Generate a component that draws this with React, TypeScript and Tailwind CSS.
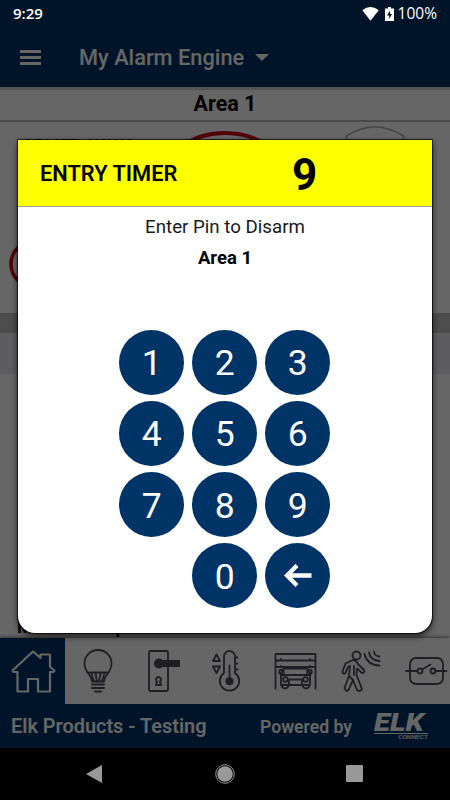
import React, { useState } from "react";

const stroke = { fill: "none", stroke: "currentColor", strokeWidth: 1.8, strokeLinecap: "round", strokeLinejoin: "round" } as const;

function HomeIcon() {
  return (
    <svg width="46" height="46" viewBox="0 0 46 46" {...stroke} strokeWidth={2.2}>
      <path d="M2.500 22.500 L23 3.500 L30.500 10 V6.500 H40 V19 L44.500 22.500 L43.500 24 H40 V43.500 H28 V31 H18 V43.500 H7.500 V24 H3.500 Z" />
    </svg>
  );
}

function BulbIcon() {
  return (
    <svg width="46" height="46" viewBox="0 0 46 46" {...stroke}>
      <path d="M17 33.500 C17 27 9.500 25 9.500 15.500 A13.500 13.500 0 0 1 36.500 15.500 C36.500 25 29 27 29 33.500 Z" />
      <path d="M14 24.500 H32 M16.500 25.500 L19 33.500 M20.500 25.500 L22 33.500 M25.500 25.500 L24 33.500 M29.500 25.500 L27 33.500 M17 36.500 H29 M17 40 H29 M20 43.500 H26" />
    </svg>
  );
}

function DoorIcon() {
  return (
    <svg width="46" height="46" viewBox="0 0 46 46" {...stroke}>
      <rect x="8" y="3" width="19" height="40" rx="1.500" />
      <circle cx="18" cy="15.500" r="5" fill="currentColor" stroke="none" />
      <path d="M18 12 H39 V19 H18 Z" fill="currentColor" stroke="none" />
      <path d="M16 33.500 A2.500 2.500 0 1 1 19 33.500 L20 37 H15 Z" strokeWidth="2" />
    </svg>
  );
}

function ThermometerIcon() {
  return (
    <svg width="46" height="46" viewBox="0 0 46 46" {...stroke}>
      <path d="M18 25 V8.500 A5.500 5.500 0 0 1 29 8.500 V25 A9.700 9.700 0 1 1 18 25 Z" />
      <path d="M23.500 17.500 V33 M30 9.500 H31.500 M30 15.500 H31.500 M30 21.500 H31.500" />
      <circle cx="23.500" cy="33.300" r="4" fill="currentColor" stroke="none" />
      <path d="M10.500 6.500 L14 13 H7 Z M7 18.500 H14 L10.500 25 Z" />
    </svg>
  );
}

function GarageIcon() {
  return (
    <svg width="46" height="46" viewBox="0 0 46 46" {...stroke}>
      <path d="M3.500 40.500 V6 H43.500 V40.500 M4 12.500 H43 M4 19 H43 M9 11 H9.100 M38 11 H38.100 M9 18 H9.100 M38 18 H38.100" />
      <path d="M9 37 V25 L12 20.500 H35 L38 25 V37 Z M9 27 H38 M17 36 V31.500 H30 V36" />
      <circle cx="9.500" cy="24" r="2.300" />
      <circle cx="37.500" cy="24" r="2.300" />
      <circle cx="13.500" cy="31.500" r="2.300" />
      <circle cx="33.500" cy="31.500" r="2.300" />
      <path d="M10 37 V39 Q13 42 16 39 V37 M31 37 V39 Q34 42 37 39 V37" />
    </svg>
  );
}

function MotionIcon() {
  return (
    <svg width="46" height="46" viewBox="0 0 46 46" {...stroke}>
      <circle cx="18.500" cy="7.500" r="4" />
      <path d="M15 12 L7.500 15.500 L4.500 23.500 Q5 27 7.500 25 L10 19 L12 18 L11 28 L6.500 40 Q8 44.500 10.500 42 L15 32 L19 42 Q22 44.500 24 41 L18.500 27 L19 20.500 L24 25 Q27 25 26 22 L20 16 Q18 12 15 12 Z" />
      <path d="M16 18 V27 M11 28 L15 32" />
      <path d="M26.500 6 Q29 17 41.500 17.500 M31 4.500 Q32.500 12.500 41.500 13 M36 3.500 Q36.500 8 41.500 8.500" />
    </svg>
  );
}

function SwitchIcon() {
  return (
    <svg width="46" height="46" viewBox="0 0 46 46" {...stroke}>
      <rect x="7" y="10" width="33" height="26" rx="6" />
      <circle cx="17" cy="23" r="2.500" />
      <circle cx="30" cy="23" r="2.500" />
      <path d="M3 23 H14.500 M32.500 23 H43.500 M19 21.500 L27.500 16.500" />
    </svg>
  );
}

function BackArrow() {
  return (
    <svg width="28" height="24" viewBox="0 0 28 24" fill="none" stroke="white" strokeWidth="4.300">
      <path d="M13 1.500 L3 11.500 L13 21.500 M3 11.500 H27.500" />
    </svg>
  );
}

const tabs = [BulbIcon, DoorIcon, ThermometerIcon, GarageIcon, MotionIcon, SwitchIcon];

const keys = ["1", "2", "3", "4", "5", "6", "7", "8", "9", "", "0", "back"];

function StatusBar() {
  return (
    <div className="absolute inset-x-0 top-0 z-20 flex h-[27px] items-center justify-between px-[13px] text-white">
      <span className="font-['Open_Sans',sans-serif] text-[15px] font-semibold">9:29</span>
      <div className="flex items-center">
        <svg className="mr-[6px]" width="17" height="14" viewBox="0 0 17 14" fill="white">
          <path d="M0.300 3.200 Q8.500 -3 16.700 3.200 L8.500 13.700 Z" />
        </svg>
        <svg className="mr-[4px]" width="9" height="14" viewBox="0 0 9 14">
          <path d="M3 0 H6 V1.500 H9 V14 H0 V1.500 H3 Z" fill="white" />
          <path d="M5 3.500 L2 8.500 H4.200 V12 L7 7 H5 Z" fill="#001428" />
        </svg>
        <span className="font-['Open_Sans',sans-serif] text-[15.500px] font-medium">100%</span>
      </div>
    </div>
  );
}

function Dialog() {
  const [pin, setPin] = useState("");

  const press = (key: string) => {
    if (key === "back") setPin(pin.slice(0, -1));
    else setPin(pin + key);
  };

  return (
    <div className="absolute left-[18px] top-[140px] z-10 h-[493px] w-[414px] overflow-hidden rounded-b-[17px] bg-white text-black shadow-[0_0_1px_0.5px_rgba(0,0,0,0.7),0_3px_7px_rgba(0,0,0,0.7)]">
      <div className="flex h-[67px] items-center border-b border-[#9c9c9c] bg-[#ffff00] pt-[3px]">
        <h2 className="w-[274px] pl-[22px] text-[21.800px] font-semibold">ENTRY TIMER</h2>
        <span className="pt-[1px] text-[44px] font-bold leading-none">9</span>
      </div>
      <p className="mt-[6px] text-center text-[18.700px] leading-7 text-[#181818]">Enter Pin to Disarm</p>
      <p className="mt-[3px] text-center text-[18.500px] leading-7 font-bold">Area 1</p>
      <div className="ml-[101.300px] mt-[57.500px] grid w-max grid-cols-3 gap-x-2 gap-y-[6.200px]">
        {keys.map((key, i) =>
          key === "" ? (
            <span key={i} />
          ) : (
            <button key={i} onClick={() => press(key)} className="flex size-[65px] items-center justify-center rounded-full bg-[#003366] text-[35.500px] leading-none text-white">
              {key === "back" ? <BackArrow /> : <span className="pt-[4px]">{key}</span>}
            </button>
          )
        )}
      </div>
    </div>
  );
}

export default function App() {
  return (
    <div className="relative flex h-[800px] w-[450px] flex-col overflow-hidden bg-black font-[Roboto,sans-serif]">
      <StatusBar />

      <div className="relative flex h-[748px] flex-col bg-white">
        <header className="flex h-[87px] items-end bg-[#003366] pb-[14px] pl-5 text-white">
          <div className="mb-[8.500px] flex w-[21px] flex-col gap-[3.500px]">
            <span className="h-[2.500px] bg-white" />
            <span className="h-[2.500px] bg-white" />
            <span className="h-[2.500px] bg-white" />
          </div>
          <h1 className="ml-[38px] text-[21.800px] leading-[30px] font-medium">My Alarm Engine</h1>
          <svg className="mb-[12px] ml-[11px]" width="14" height="7" viewBox="0 0 14 7" fill="white">
            <path d="M0 0 H14 L7 7 Z" />
          </svg>
        </header>
        <div className="h-[35px] border-t-[3px] border-b-2 border-t-[#d0d0d0] border-b-[#bbb] text-center text-[21.500px] leading-[27px] font-bold text-black">Area 1</div>

        {/* area status, mostly covered by the dialog */}
        <div className="relative h-[191px] overflow-hidden">
          <p className="pl-[22px] pt-[11px] text-[17.300px] leading-6 font-medium">ARMED AWAY</p>
          <svg className="absolute inset-0" width="450" height="191" viewBox="0 122 450 191" fill="none">
            <ellipse cx="225" cy="174" rx="58" ry="41" stroke="#cc0011" strokeWidth="4" />
            <circle cx="34" cy="264" r="23" stroke="#cc0011" strokeWidth="3.500" />
            <path d="M346.500 145 V136 Q375 118 403.500 136 V145" stroke="#aaa" strokeWidth="1.500" />
          </svg>
        </div>
        <div className="h-5 bg-[#c0c0c0]" />
        <div className="h-[41px] bg-[#e8e8ee]" />
        <div className="flex flex-1 items-end overflow-hidden pl-[17px]">
          <span className="text-[18px] leading-[22px] font-bold">Motion Setup</span>
        </div>

        <nav className="flex h-[66px] shrink-0 bg-white text-[#4d4d58] shadow-[0_-1px_3px_rgba(0,0,0,0.5)]">
          <div className="flex w-[65px] shrink-0 items-center justify-center bg-[#003366] text-white">
            <HomeIcon />
          </div>
          {tabs.map((Icon, i) => (
            <div key={i} className="flex w-[65.700px] shrink-0 items-center justify-center">
              <Icon />
            </div>
          ))}
        </nav>
        <footer className="flex h-[44px] shrink-0 items-center bg-[#003366] pl-[11px] text-white">
          <span className="w-[249px] pt-[2px] text-[19.900px] font-semibold">Elk Products - Testing</span>
          <span className="w-[114px] pt-[3px] text-[17.600px] font-semibold">Powered by</span>
          <div className="flex w-[54px] flex-col">
            <span className="h-[20px] w-max origin-left scale-x-[1.130] text-[26px] leading-[20px] font-black italic">ELK</span>
            <span className="mt-[1px] h-px bg-white" />
            <span className="mt-[1px] w-max origin-right scale-x-[1.300] self-end text-[5px] leading-[5px] font-medium">CONNECT</span>
          </div>
        </footer>
        <div className="absolute inset-0 bg-black/60" />
      </div>

      <div className="flex flex-1 items-center bg-black">
        <svg width="450" height="52" viewBox="0 748 450 52" fill="#999">
          <path d="M86 774 L102 765 V783 Z" />
          <circle cx="225" cy="774" r="7.800" />
          <circle cx="225" cy="774" r="9.300" fill="none" stroke="#999" strokeWidth="1" />
          <rect x="346" y="765" width="17" height="17" rx="1" />
        </svg>
      </div>

      <Dialog />
    </div>
  );
}
